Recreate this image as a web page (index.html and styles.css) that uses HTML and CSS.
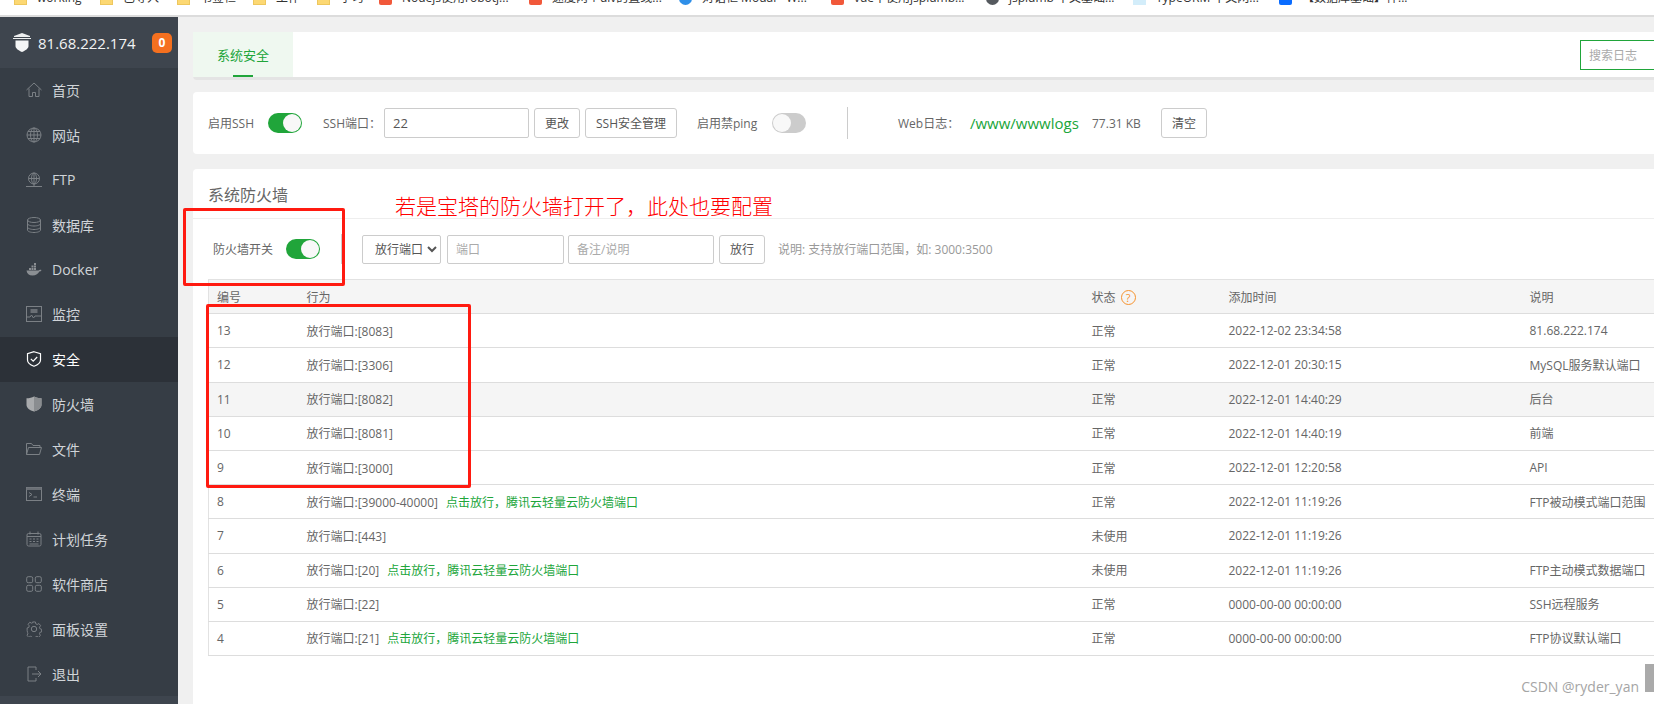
FILE: index.html
```html
<!DOCTYPE html>
<html lang="zh-CN">
<head>
    <meta charset="UTF-8">
    <meta name="viewport" content="width=device-width, initial-scale=1.0">
    <title>系统安全</title>
    <link rel="stylesheet" href="styles.css">
</head>
<body>

    <!-- Browser bookmarks (cut off by the screenshot) -->
    <div class="bookmarks">
        <div class="bookmark-row">
            <a class="bookmark bm-1"><span class="bm-icon folder"></span>working</a>
            <a class="bookmark bm-2"><span class="bm-icon folder"></span>已导入</a>
            <a class="bookmark bm-3"><span class="bm-icon folder"></span>书签栏</a>
            <a class="bookmark bm-4"><span class="bm-icon folder"></span>工作</a>
            <a class="bookmark bm-5"><span class="bm-icon folder"></span>学习</a>
            <a class="bookmark bm-6"><span class="bm-icon csdn"></span>Nodejs使用robotj...</a>
            <a class="bookmark bm-7"><span class="bm-icon csdn"></span>速度两个div的直线...</a>
            <a class="bookmark bm-8"><span class="bm-icon round-blue"></span>对话框 Modal - W...</a>
            <a class="bookmark bm-9"><span class="bm-icon csdn"></span>vue中使用jsplumb...</a>
            <a class="bookmark bm-10"><span class="bm-icon round-dark"></span>jsplumb 中文基础...</a>
            <a class="bookmark bm-11"><span class="bm-icon pale"></span>TypeORM 中文网...</a>
            <a class="bookmark bm-12"><span class="bm-icon blue"></span>【数据库基础】神...</a>
        </div>
    </div>

    <div class="layout">
        <!-- Sidebar -->
        <aside class="sidebar">
            <div class="side-head">
                <svg class="side-logo" viewBox="0 0 18 19"><path d="M1 3l8-3 8 3v1H1z" fill="#eceeef"/><path d="M0 5h18v1H0z" fill="#eceeef"/><path d="M2.500 7.500h13V13c0 2.500-3 4.500-6.500 6-3.500-1.500-6.500-3.500-6.500-6z" fill="#f4f5f6"/></svg>
                <span class="side-ip">81.68.222.174</span>
                <span class="side-badge">0</span>
            </div>
            <nav class="menu">
                <a class="menu-item">
                    <svg class="menu-icon" viewBox="0 0 16 16"><path d="M.500 8L8 1l7.500 7M3 6.500v8h3.500v-4h3v4H13v-8"/></svg>首页
                </a>
                <a class="menu-item">
                    <svg class="menu-icon" viewBox="0 0 16 16"><circle cx="8" cy="8" r="7"/><ellipse cx="8" cy="8" rx="3.500" ry="7"/><path d="M1 8h14M2 4.500h12M2 11.500h12M8 1v14"/></svg>网站
                </a>
                <a class="menu-item">
                    <svg class="menu-icon" viewBox="0 0 16 16"><circle cx="8" cy="6.500" r="5.500"/><ellipse cx="8" cy="6.500" rx="2.500" ry="5.500"/><path d="M2.500 6.500h11M8 1v13M0 14.500h16"/></svg>FTP
                </a>
                <a class="menu-item">
                    <svg class="menu-icon" viewBox="0 0 16 16"><ellipse cx="8" cy="3" rx="6.500" ry="2.500"/><path d="M1.500 3v10c0 1.400 2.900 2.500 6.500 2.500s6.500-1.100 6.500-2.500V3M1.500 6.500C1.500 7.900 4.400 9 8 9s6.500-1.100 6.500-2.500M1.500 10c0 1.400 2.900 2.500 6.500 2.500s6.500-1.100 6.500-2.500"/></svg>数据库
                </a>
                <a class="menu-item">
                    <svg class="menu-icon solid" viewBox="0 0 16 16"><path d="M.500 8.500h12c.6-.8 1.800-1 3-.5-.5 1-1.200 1.500-2.200 1.600C12.400 12 10 13.500 6.500 13.500c-3.500 0-5.500-1.500-6-5z"/><path d="M3 6h2v2H3zM5.500 6h2v2h-2zM8 6h2v2H8zM5.500 3.500h2v2h-2zM8 3.500h2v2H8zM8 1h2v2H8z"/></svg>Docker
                </a>
                <a class="menu-item">
                    <svg class="menu-icon" viewBox="0 0 16 16"><rect x=".500" y=".500" width="15" height="15"/><path d="M1 11h3l1.500-2 2 3 1.500-2h6"/><path class="fill" d="M4.500 3h7v4h-7z"/></svg>监控
                </a>
                <a class="menu-item active">
                    <svg class="menu-icon" viewBox="0 0 16 16"><path d="M8 .700l6.500 2.100V9c0 2.800-3 5-6.500 6.300C4.500 14 1.500 11.800 1.500 9V2.800z"/><path d="M4.800 7.800l2.400 2.400 4-4.200"/></svg>安全
                </a>
                <a class="menu-item item-firewall">
                    <svg class="menu-icon solid" viewBox="0 0 16 16"><path d="M8 .500c2 1.200 4.500 1.800 7.500 1.800V9c0 3-3.200 5.300-7.500 6.500C3.700 14.300.5 12 .5 9V2.300c3 0 5.500-.6 7.500-1.800z"/><path class="shade" d="M8 .500c2 1.200 4.500 1.800 7.500 1.800V9c0 3-3.200 5.300-7.500 6.500z"/></svg>防火墙
                </a>
                <a class="menu-item">
                    <svg class="menu-icon" viewBox="0 0 16 16"><path d="M.500 13.500v-11h5l1.500 2h7v2M.500 13.500l2-7h13l-2 7z"/></svg>文件
                </a>
                <a class="menu-item">
                    <svg class="menu-icon" viewBox="0 0 16 16"><rect x=".500" y="1.500" width="15" height="13"/><path class="fill" d="M.500 1.500h15v2.500H.500z"/><path d="M3 6.500l3 2-3 2M7.500 11H11"/></svg>终端
                </a>
                <a class="menu-item">
                    <svg class="menu-icon" viewBox="0 0 16 16"><rect x="1" y="2.500" width="14" height="12.500" rx="1.500"/><path d="M4 .500v3M12 .500v3M1 5.500h14M3.500 8h2M7 8h2M10.500 8h2M3.500 10.500h2M7 10.500h2M10.500 10.500h2M3.500 13h9"/></svg>计划任务
                </a>
                <a class="menu-item">
                    <svg class="menu-icon" viewBox="0 0 16 16"><rect x=".700" y=".700" width="6" height="6" rx="1.500"/><rect x="9.300" y=".700" width="6" height="6" rx="1.500"/><rect x=".700" y="9.300" width="6" height="6" rx="1.500"/><rect x="9.300" y="9.300" width="6" height="6" rx="1.500"/></svg>软件商店
                </a>
                <a class="menu-item">
                    <svg class="menu-icon" viewBox="0 0 16 16"><path d="M6.500.800h3l.4 2 1.500.7 1.800-1 1.800 2.200-1.200 1.600.4 1.600 1.800.6v2.800l-1.800.5-.4 1.500 1 1.700-2 1.900-1.700-1-1.500.6-.4 1.700h-3l-.4-1.700-1.500-.6-1.700 1-2-1.900 1-1.700-.4-1.500L.800 9.900V7.100l1.800-.6.4-1.600-1.200-1.600L3.600 1.100l1.800 1 1.500-.7z" transform="scale(.95) translate(.4 .2)"/><circle cx="8" cy="8" r="2.700"/></svg>面板设置
                </a>
                <a class="menu-item">
                    <svg class="menu-icon" viewBox="0 0 16 16"><path d="M10 1H2v14h8M10 1v3M10 12v3M6 8h9M12 5l3 3-3 3"/></svg>退出
                </a>
            </nav>
            <div class="side-foot"></div>
        </aside>

        <!-- Main content -->
        <main class="main">
            <div class="card tabs">
                <div class="tab active">系统安全</div>
                <input class="log-search" type="text" placeholder="搜索日志">
            </div>

            <div class="card settings">
                <span class="lbl lbl-ssh">启用SSH</span>
                <span class="toggle on"></span>
                <span class="lbl lbl-port">SSH端口：</span>
                <input class="field field-port" type="text" value="22">
                <button class="btn btn-change" type="button">更改</button>
                <button class="btn btn-manage" type="button">SSH安全管理</button>
                <span class="lbl lbl-ping">启用禁ping</span>
                <span class="toggle"></span>
                <span class="vline"></span>
                <span class="lbl lbl-web">Web日志：</span>
                <span class="log-path">/www/wwwlogs</span>
                <span class="lbl lbl-size">77.31 KB</span>
                <button class="btn btn-clear" type="button">清空</button>
            </div>

            <div class="card firewall">
                <h2 class="fw-title">系统防火墙</h2>
                <div class="fw-bar">
                    <div class="fw-switch">
                        <span class="lbl lbl-fw">防火墙开关</span>
                        <span class="toggle on"></span>
                    </div>
                    <select class="field fw-select">
                        <option>放行端口</option>
                    </select>
                    <input class="field fw-port" type="text" placeholder="端口">
                    <input class="field fw-note" type="text" placeholder="备注/说明">
                    <button class="btn btn-allow" type="button">放行</button>
                    <span class="fw-tip">说明: 支持放行端口范围，如: 3000:3500</span>
                </div>

                <table class="fw-table">
                    <colgroup>
                        <col class="col-id"><col class="col-act"><col class="col-state"><col class="col-time"><col class="col-desc">
                    </colgroup>
                    <thead>
                        <tr>
                            <th>编号</th>
                            <th>行为</th>
                            <th>状态<span class="help">?</span></th>
                            <th>添加时间</th>
                            <th>说明</th>
                        </tr>
                    </thead>
                    <tbody>
                        <tr><td>13</td><td>放行端口:[8083]</td><td>正常</td><td>2022-12-02 23:34:58</td><td>81.68.222.174</td></tr>
                        <tr><td>12</td><td>放行端口:[3306]</td><td>正常</td><td>2022-12-01 20:30:15</td><td>MySQL服务默认端口</td></tr>
                        <tr class="hover"><td>11</td><td>放行端口:[8082]</td><td>正常</td><td>2022-12-01 14:40:29</td><td>后台</td></tr>
                        <tr><td>10</td><td>放行端口:[8081]</td><td>正常</td><td>2022-12-01 14:40:19</td><td>前端</td></tr>
                        <tr><td>9</td><td>放行端口:[3000]</td><td>正常</td><td>2022-12-01 12:20:58</td><td>API</td></tr>
                        <tr><td>8</td><td>放行端口:[39000-40000]<a class="go">点击放行，腾讯云轻量云防火墙端口</a></td><td>正常</td><td>2022-12-01 11:19:26</td><td>FTP被动模式端口范围</td></tr>
                        <tr><td>7</td><td>放行端口:[443]</td><td>未使用</td><td>2022-12-01 11:19:26</td><td></td></tr>
                        <tr><td>6</td><td>放行端口:[20]<a class="go">点击放行，腾讯云轻量云防火墙端口</a></td><td>未使用</td><td>2022-12-01 11:19:26</td><td>FTP主动模式数据端口</td></tr>
                        <tr><td>5</td><td>放行端口:[22]</td><td>正常</td><td>0000-00-00 00:00:00</td><td>SSH远程服务</td></tr>
                        <tr><td>4</td><td>放行端口:[21]<a class="go">点击放行，腾讯云轻量云防火墙端口</a></td><td>正常</td><td>0000-00-00 00:00:00</td><td>FTP协议默认端口</td></tr>
                    </tbody>
                </table>
            </div>
        </main>
    </div>

    <!-- Red annotations drawn over the screenshot -->
    <div class="mark mark-switch"></div>
    <div class="mark mark-rows"></div>
    <div class="mark-text">若是宝塔的防火墙打开了，此处也要配置</div>

    <div class="scroll-thumb"></div>
    <div class="watermark">CSDN @ryder_yan</div>

</body>
</html>
```

FILE: styles.css
```css
/* Global Reset */
* { margin: 0; padding: 0; box-sizing: border-box; }

html, body { height: 100%; }

body {
    position: relative;
    display: flex;
    flex-direction: column;
    overflow: hidden;
    font-family: "Open Sans", "Noto Sans CJK SC", sans-serif;
    font-size: 12px;
    color: #666;
    background-color: #f0f0f0;
}

/* Bookmarks */
.bookmarks {
    flex: none;
    height: 17px;
    overflow: hidden;
    background-color: #fff;
    border-bottom: 2px solid #dcdcdc;
}

.bookmark-row {
    display: flex;
    margin-top: -10px;
    padding-left: 14px;
    font-size: 12px;
    line-height: 16px;
    color: #333;
}

.bookmark {
    display: flex;
    flex: none;
    align-items: center;
    white-space: nowrap;
}

.bm-1 { width: 86px; }
.bm-2 { width: 77px; }
.bm-3 { width: 76px; }
.bm-4 { width: 64px; }
.bm-5 { width: 62px; }
.bm-6 { width: 150px; }
.bm-7 { width: 150px; }
.bm-8 { width: 152px; }
.bm-9 { width: 155px; }
.bm-10 { width: 147px; }
.bm-11 { width: 146px; }
.bm-12 { width: 140px; }

.bm-icon {
    flex: none;
    width: 13px;
    height: 13px;
    margin-right: 10px;
}

.folder { background-color: #fcd873; border: 1px solid #eec75d; }
.csdn { background-color: #f1583a; border-radius: 2px; }
.round-blue { background-color: #2f8fe8; border-radius: 50%; }
.round-dark { background-color: #55595e; border-radius: 50%; }
.pale { background-color: #d3edfa; }
.blue { background-color: #0a6cff; border-radius: 2px; }

/* Page layout */
.layout {
    display: flex;
    flex: 1;
    min-height: 0;
}

/* Sidebar */
.sidebar {
    display: flex;
    flex: none;
    flex-direction: column;
    width: 178px;
    background-color: #363d45;
}

.side-head {
    display: flex;
    flex: none;
    align-items: center;
    height: 51px;
    padding: 0 6px 0 13px;
    background-color: #3e454e;
}

.side-logo {
    flex: none;
    width: 18px;
    height: 19px;
    margin-right: 7px;
}

.side-ip {
    flex: 1;
    font-size: 15px;
    color: #f2f3f4;
}

.side-badge {
    width: 20px;
    height: 20px;
    font-size: 12px;
    font-weight: bold;
    line-height: 20px;
    text-align: center;
    color: #fff;
    background-color: #f5701f;
    border-radius: 5px;
}

.menu-item {
    display: flex;
    align-items: center;
    height: 44.9px;
    padding-left: 26px;
    padding-bottom: 1px;
    font-size: 14px;
    color: #d0d4d8;
}

.menu-item.active {
    color: #fff;
    background-color: #2c3138;
}

.menu-icon {
    flex: none;
    width: 16px;
    height: 16px;
    margin-right: 10px;
    fill: none;
    stroke: #7b8085;
    stroke-width: 1;
}

.menu-icon .fill { fill: #6a6f75; stroke: none; }

.menu-icon.solid { fill: #8b8f93; stroke: none; }

.item-firewall .menu-icon { fill: #a9abad; }

.item-firewall .shade { fill: #8a8d90; }

.active .menu-icon { stroke: #fff; stroke-width: 1.2; }

.side-foot {
    flex: 1;
    background-color: #3e454e;
}

/* Main content */
.main {
    flex: 1;
    min-width: 0;
    padding: 15px 0 0 15px;
}

.card {
    background-color: #fff;
    border-radius: 4px 0 0 4px;
}

.lbl { flex: none; white-space: nowrap; }

.tabs {
    display: flex;
    align-items: center;
    height: 48px;
    border-bottom: 3px solid #e4e4e4;
}

.tab {
    position: relative;
    width: 100px;
    height: 100%;
    font-size: 13px;
    line-height: 46px;
    text-align: center;
    color: #20a53a;
    background-color: #eff8f0;
}

.tab.active::after {
    content: "";
    position: absolute;
    left: 40px;
    bottom: 0;
    width: 20px;
    height: 2px;
    background-color: #20a53a;
}

.log-search {
    flex: none;
    width: 120px;
    height: 30px;
    margin: 1px -46px 0 auto;
    padding-left: 8px;
    font: inherit;
    border: 1px solid #20a53a;
    outline: none;
}

input::placeholder { color: #aaa; opacity: 1; }

/* SSH settings row */
.settings {
    display: flex;
    align-items: center;
    height: 62px;
    margin-top: 12px;
    padding-left: 15px;
}

.toggle {
    position: relative;
    flex: none;
    width: 34px;
    height: 20px;
    background-color: #ccc;
    border-radius: 10px;
}

.toggle::after {
    content: "";
    position: absolute;
    top: 1px;
    left: 1px;
    width: 18px;
    height: 18px;
    background-color: #f8f8f8;
    border-radius: 50%;
}

.toggle.on { background-color: #20a53a; }

.toggle.on::after { left: 15px; }

.field {
    flex: none;
    height: 30px;
    font: inherit;
    color: #555;
    background-color: #fff;
    border: 1px solid #ccc;
    border-radius: 2px;
    outline: none;
}

.btn {
    flex: none;
    height: 30px;
    font: inherit;
    color: #555;
    background-color: #fff;
    border: 1px solid #ccc;
    border-radius: 3px;
}

.lbl-ssh { width: 46px; margin-right: 14px; }
.lbl-port { width: 61px; margin-left: 21px; }
.field-port { width: 145px; padding-left: 8px; font-size: 13px; }
.btn-change { width: 46px; margin-left: 5px; }
.btn-manage { width: 92px; margin-left: 5px; }
.lbl-ping { width: 62px; margin: 0 13px 0 20px; }

.vline {
    flex: none;
    width: 1px;
    height: 32px;
    margin-left: 41px;
    background-color: #ccc;
}

.lbl-web { width: 56px; margin: 0 16px 0 50px; }

.log-path {
    flex: none;
    width: 122px;
    font-size: 15px;
    color: #20a53a;
}

.lbl-size { width: 69px; }
.btn-clear { width: 46px; }

/* Firewall card */
.firewall {
    margin-top: 15px;
    padding-bottom: 60px;
}

.fw-title {
    height: 50px;
    padding: 15px 0 0 15px;
    font-size: 16px;
    font-weight: normal;
    line-height: 22px;
    color: #666;
    border-bottom: 1px solid #eee;
}

.fw-bar {
    display: flex;
    align-items: center;
    height: 60px;
    padding-left: 15px;
}

.fw-switch {
    display: flex;
    flex: none;
    align-items: center;
    width: 134px;
    height: 30px;
    padding-left: 5px;
    border-right: 1px solid #ccc;
}

.lbl-fw { width: 60px; margin-right: 13px; }

.fw-select { width: 79px; height: 29px; margin-left: 20px; padding-left: 8px; }
.fw-port { width: 117px; height: 29px; margin-left: 6px; padding-left: 8px; }
.fw-note { width: 146px; height: 29px; margin-left: 4px; padding-left: 8px; }
.btn-allow { width: 46px; height: 29px; margin-left: 5px; }

.fw-tip {
    margin-left: 13px;
    white-space: nowrap;
    color: #999;
}

/* Firewall table */
.fw-table {
    width: 1446px;
    margin-left: 15px;
    border-collapse: collapse;
    table-layout: fixed;
    border: 1px solid #e2e2e2;
    border-right: none;
}

.col-id { width: 90px; }
.col-act { width: 785px; }
.col-state { width: 137px; }
.col-time { width: 301px; }
.col-desc { width: 133px; }

.fw-table th,
.fw-table td {
    height: 34.2px;
    padding: 0 0 0 8px;
    font-weight: normal;
    text-align: left;
    white-space: nowrap;
    color: #666;
    border-bottom: 1px solid #ddd;
}

.fw-table thead { background-color: #f5f5f5; }

.fw-table tr.hover { background-color: #f5f5f5; }

.go {
    margin-left: 8px;
    color: #20a53a;
}

.help {
    display: inline-block;
    width: 15px;
    height: 15px;
    margin-left: 5px;
    font-size: 11px;
    line-height: 13px;
    text-align: center;
    color: #f7922d;
    border: 1px solid #f7922d;
    border-radius: 50%;
}

/* Annotations */
.mark {
    position: absolute;
    border: 3px solid #ff1a10;
    border-radius: 2px;
}

.mark-switch { left: 183px; top: 208px; width: 162px; height: 78px; }
.mark-rows { left: 206px; top: 304px; width: 265px; height: 184px; }

.mark-text {
    position: absolute;
    left: 395px;
    top: 191px;
    font-size: 21px;
    font-weight: 300;
    line-height: 30px;
    white-space: nowrap;
    color: #ff0000;
}

.scroll-thumb {
    position: absolute;
    right: 0;
    top: 664px;
    width: 9px;
    height: 28px;
    background-color: #aaa;
}

.watermark {
    position: absolute;
    right: 15px;
    top: 677px;
    font-size: 14px;
    line-height: 20px;
    color: #a5a5a5;
}
```
